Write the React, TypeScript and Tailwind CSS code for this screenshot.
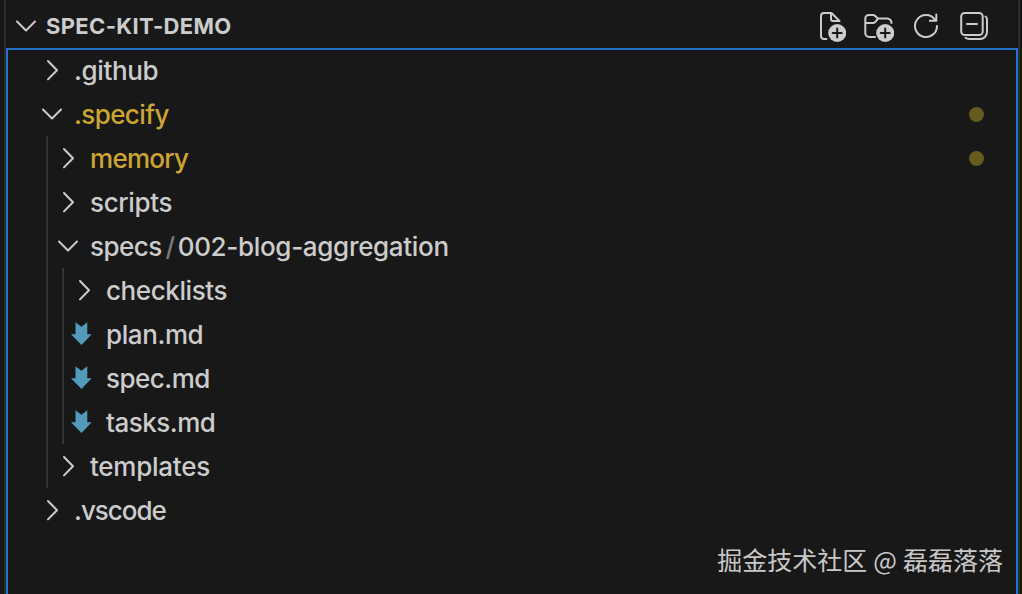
import type { ReactNode } from 'react';

type Row = {
  name: string;
  depth: number;
  kind: 'open' | 'closed' | 'markdown';
  tracking: string;
  modified?: boolean;
  compact?: string;
};

const rows: Row[] = [
  { name: '.github', depth: 0, kind: 'closed', tracking: 'tracking-[-0.35px]' },
  { name: '.specify', depth: 0, kind: 'open', tracking: 'tracking-[-0.6px]', modified: true },
  { name: 'memory', depth: 1, kind: 'closed', tracking: 'tracking-[-0.7px]', modified: true },
  { name: 'scripts', depth: 1, kind: 'closed', tracking: 'tracking-[-0.35px]' },
  { name: 'specs', depth: 1, kind: 'open', tracking: 'tracking-[-0.55px]', compact: '002-blog-aggregation' },
  { name: 'checklists', depth: 2, kind: 'closed', tracking: 'tracking-[-0.4px]' },
  { name: 'plan.md', depth: 2, kind: 'markdown', tracking: 'tracking-[-0.4px]' },
  { name: 'spec.md', depth: 2, kind: 'markdown', tracking: 'tracking-[-0.5px]' },
  { name: 'tasks.md', depth: 2, kind: 'markdown', tracking: 'tracking-[-0.5px]' },
  { name: 'templates', depth: 1, kind: 'closed', tracking: 'tracking-[-0.25px]' },
  { name: '.vscode', depth: 0, kind: 'closed', tracking: 'tracking-[-1px]' },
];

function Icon({ children }: { children: ReactNode }) {
  return (
    <svg
      viewBox="0 0 32 32"
      className="size-8 shrink-0"
      fill="none"
      stroke="currentColor"
      strokeWidth="2"
      strokeLinecap="round"
      strokeLinejoin="round"
      aria-hidden="true"
    >
      {children}
    </svg>
  );
}

function Chevron({ open }: { open: boolean }) {
  return (
    <Icon>
      {open ? <path d="M7 11.5l9 9 9-9" /> : <path d="M12 7l9 9.2-9 9.2" />}
    </Icon>
  );
}

function MarkdownIcon() {
  return (
    <svg viewBox="0 0 32 32" className="size-8 shrink-0" fill="#519aba" aria-hidden="true">
      <path d="M9.5 4.3l6 4.4 5.8-4.4v11.9h4.4L15.5 27 5 16.2h4.5z" />
    </svg>
  );
}

function PlusBadge() {
  return (
    <>
      <circle cx="23.2" cy="23" r="9" fill="currentColor" stroke="none" />
      <path d="M23.2 18.5v9M18.7 23h9" stroke="#181818" />
    </>
  );
}

function Actions() {
  return (
    <div className="flex gap-4 pt-1">
      <button aria-label="New File">
        <Icon>
          <path d="M12.5 29H10a3 3 0 0 1-3-3V6a3 3 0 0 1 3-3h7.5l8 8H19a2 2 0 0 1-2-2V3" />
          <PlusBadge />
        </Icon>
      </button>
      <button aria-label="New Folder">
        <Icon>
          <path d="M13 27H7.3a4 4 0 0 1-4-4V8.5A3.5 3.5 0 0 1 6.8 5H11c1 0 1.5.3 2.2 1l2.6 2.5H25a4.5 4.5 0 0 1 4.5 4.5M3.3 13H11c1 0 1.5-.3 2.2-1l2.9-3.3" />
          <PlusBadge />
        </Icon>
      </button>
      <button aria-label="Refresh">
        <Icon>
          <path d="M27 16a11 11 0 1 1-2-6.3M26.3 4.5v6.3h-6.5" />
        </Icon>
      </button>
      <button aria-label="Collapse Folders">
        <Icon>
          <rect x="3.2" y="3" width="21.5" height="22" rx="3.5" />
          <path d="M9 14h10M29 9v13a7 7 0 0 1-7 7H11.5c-1.6 0-3-.4-4-1.2M27.5 6.500c1 .7 1.500 1.500 1.500 2.500" />
        </Icon>
      </button>
    </div>
  );
}

function TreeRow({ row }: { row: Row }) {
  return (
    <li className={`flex h-11 items-center ${row.modified ? 'text-[#cca72b]' : 'text-[#cccccc]'}`}>
      {/* indent guides */}
      {row.depth > 0 && <span className="ml-2.5 h-full w-4 border-l-2 border-[#333333]" />}
      {row.depth > 1 && <span className="h-full w-4 border-l-2 border-[#333333]" />}
      <div className={`flex flex-1 items-center ${row.depth > 0 ? '-ml-2.5' : ''}`}>
        <span className={row.kind === 'markdown' ? '-ml-0.5 mr-2 text-[#cccccc]' : 'mr-1.5 text-[#cccccc]'}>
          {row.kind === 'markdown' ? <MarkdownIcon /> : <Chevron open={row.kind === 'open'} />}
        </span>
        <span className={`pt-0.5 text-[26px] font-[450] leading-none ${row.tracking}`}>
          {row.name}
          {row.compact && (
            <>
              <span className="ml-1 mr-[3px] text-[#7b7b7b]">/</span>
              <span className="tracking-[-0.32px]">{row.compact}</span>
            </>
          )}
        </span>
      </div>
      {row.modified && <span className="mr-[34px] size-[15px] rounded-full bg-[#665a1c]" />}
    </li>
  );
}

export default function App() {
  return (
    <div className="relative flex h-[594px] w-[1022px] flex-col overflow-hidden bg-[#181818] pl-1 pr-0.5 font-['Inter',sans-serif] text-[#cccccc]">
      <div className="flex min-h-0 flex-1 flex-col border-x-2 border-[#2b2b2b]">
        <header className="flex h-12 shrink-0 items-center justify-between pl-1 pr-7">
          <div className="flex items-center pt-1">
            <Chevron open />
            <h1 className="ml-1 text-[22px] font-bold leading-none tracking-[0.35px]">SPEC-KIT-DEMO</h1>
          </div>
          <Actions />
        </header>
        <div className="relative flex-1">
          <ul className="pl-[30px]">
            {rows.map(row => (
              <TreeRow key={row.name} row={row} />
            ))}
          </ul>
          {/* focus ring */}
          <div className="pointer-events-none absolute inset-x-0 top-0 h-full border-x-2 border-t-2 border-[#2472c8]" />
        </div>
      </div>
      <p className="absolute bottom-[18px] right-[19px] whitespace-pre font-['Noto_Sans_CJK_SC',sans-serif] text-[25px] leading-[34px] [word-spacing:0.5px] text-[#c8c8c8]">
        掘金技术社区 @ 磊磊落落
      </p>
    </div>
  );
}
